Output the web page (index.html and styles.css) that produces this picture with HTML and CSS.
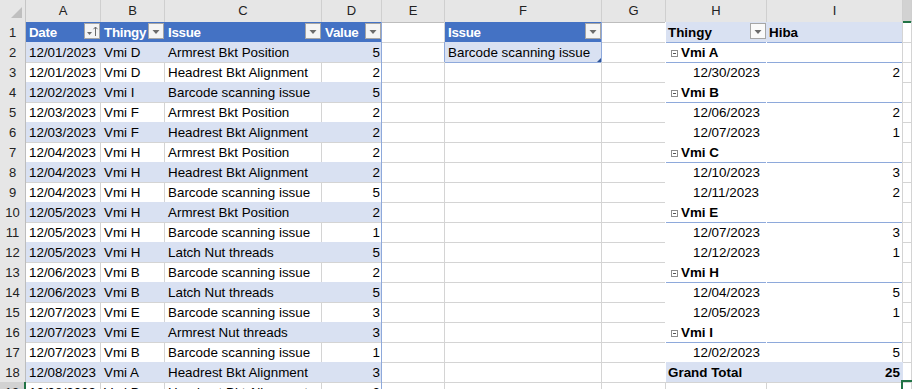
FILE: index.html
```html
<!DOCTYPE html>
<html lang="en">
<head>
  <meta charset="UTF-8">
  <title>Book1 - Excel</title>
  <link rel="stylesheet" href="styles.css">
</head>
<body>
  <div class="sheet">
    <!-- column letters -->
    <div class="row hdrow">
      <div class="corner">
        <svg width="26" height="22" viewBox="0 0 26 22"><polygon points="22,7 22,18 11,18" fill="#bfbfbf"/></svg>
      </div>
      <div class="ch">A</div>
      <div class="ch">B</div>
      <div class="ch">C</div>
      <div class="ch">D</div>
      <div class="ch">E</div>
      <div class="ch">F</div>
      <div class="ch">G</div>
      <div class="ch">H</div>
      <div class="ch">I</div>
      <div class="ch sel"></div>
    </div>

    <!-- 1 -->
    <div class="row">
      <div class="rh">1</div>
      <div class="c th">Date
        <span class="fbtn">
          <svg width="16" height="16" viewBox="0 0 16 16"><rect x="0.5" y="0.5" width="15" height="15" fill="#f4f4f4" stroke="#a6a6a6"/><polygon points="3,9 8,9 5.5,12" fill="#6b6b6b"/><path d="M11.5 13V4M9.5 6.2l2-2.2 2 2.2" stroke="#6b6b6b" fill="none"/></svg>
        </span>
      </div>
      <div class="c th">Thingy
        <span class="fbtn"><svg width="16" height="16" viewBox="0 0 16 16"><rect x="0.5" y="0.5" width="15" height="15" fill="#f4f4f4" stroke="#a6a6a6"/><polygon points="4.5,7 11.5,7 8,11" fill="#6b6b6b"/></svg></span>
      </div>
      <div class="c th">Issue
        <span class="fbtn"><svg width="16" height="16" viewBox="0 0 16 16"><rect x="0.5" y="0.5" width="15" height="15" fill="#f4f4f4" stroke="#a6a6a6"/><polygon points="4.5,7 11.5,7 8,11" fill="#6b6b6b"/></svg></span>
      </div>
      <div class="c th tr">Value
        <span class="fbtn"><svg width="16" height="16" viewBox="0 0 16 16"><rect x="0.5" y="0.5" width="15" height="15" fill="#f4f4f4" stroke="#a6a6a6"/><polygon points="4.5,7 11.5,7 8,11" fill="#6b6b6b"/></svg></span>
      </div>
      <div class="c"></div>
      <div class="c th tr">Issue
        <span class="fbtn"><svg width="16" height="16" viewBox="0 0 16 16"><rect x="0.5" y="0.5" width="15" height="15" fill="#f4f4f4" stroke="#a6a6a6"/><polygon points="4.5,7 11.5,7 8,11" fill="#6b6b6b"/></svg></span>
      </div>
      <div class="c ng"></div>
      <div class="c phd">Thingy
        <span class="fbtn"><svg width="16" height="16" viewBox="0 0 16 16"><rect x="0.5" y="0.5" width="15" height="15" fill="#fafafa" stroke="#a6a6a6"/><polygon points="4.5,7 11.5,7 8,11" fill="#6b6b6b"/></svg></span>
      </div>
      <div class="c phd pr">Hiba</div>
      <div class="c"></div>
    </div>

    <!-- 2 -->
    <div class="row">
      <div class="rh">2</div>
      <div class="c band">12/01/2023</div>
      <div class="c band">Vmi D</div>
      <div class="c band">Armrest Bkt Position</div>
      <div class="c band num tr">5</div>
      <div class="c eb"></div>
      <div class="c band slc">Barcode scanning issue<span class="grip"></span></div>
      <div class="c ng"></div>
      <div class="c pg"><span class="tog"></span>Vmi A</div>
      <div class="c pg pr"></div>
      <div class="c"></div>
    </div>

    <!-- 3 -->
    <div class="row">
      <div class="rh">3</div>
      <div class="c">12/01/2023</div>
      <div class="c">Vmi D</div>
      <div class="c">Headrest Bkt Alignment</div>
      <div class="c num tr">2</div>
      <div class="c"></div>
      <div class="c"></div>
      <div class="c ng"></div>
      <div class="c pd">12/30/2023</div>
      <div class="c pv pr">2</div>
      <div class="c"></div>
    </div>

    <!-- 4 -->
    <div class="row">
      <div class="rh">4</div>
      <div class="c band">12/02/2023</div>
      <div class="c band">Vmi I</div>
      <div class="c band">Barcode scanning issue</div>
      <div class="c band num tr">5</div>
      <div class="c"></div>
      <div class="c"></div>
      <div class="c ng"></div>
      <div class="c pg"><span class="tog"></span>Vmi B</div>
      <div class="c pg pr"></div>
      <div class="c"></div>
    </div>

    <!-- 5 -->
    <div class="row">
      <div class="rh">5</div>
      <div class="c">12/03/2023</div>
      <div class="c">Vmi F</div>
      <div class="c">Armrest Bkt Position</div>
      <div class="c num tr">2</div>
      <div class="c"></div>
      <div class="c"></div>
      <div class="c ng"></div>
      <div class="c pd">12/06/2023</div>
      <div class="c pv pr">2</div>
      <div class="c"></div>
    </div>

    <!-- 6 -->
    <div class="row">
      <div class="rh">6</div>
      <div class="c band">12/03/2023</div>
      <div class="c band">Vmi F</div>
      <div class="c band">Headrest Bkt Alignment</div>
      <div class="c band num tr">2</div>
      <div class="c"></div>
      <div class="c"></div>
      <div class="c ng"></div>
      <div class="c pd">12/07/2023</div>
      <div class="c pv pr">1</div>
      <div class="c"></div>
    </div>

    <!-- 7 -->
    <div class="row">
      <div class="rh">7</div>
      <div class="c">12/04/2023</div>
      <div class="c">Vmi H</div>
      <div class="c">Armrest Bkt Position</div>
      <div class="c num tr">2</div>
      <div class="c"></div>
      <div class="c"></div>
      <div class="c ng"></div>
      <div class="c pg"><span class="tog"></span>Vmi C</div>
      <div class="c pg pr"></div>
      <div class="c"></div>
    </div>

    <!-- 8 -->
    <div class="row">
      <div class="rh">8</div>
      <div class="c band">12/04/2023</div>
      <div class="c band">Vmi H</div>
      <div class="c band">Headrest Bkt Alignment</div>
      <div class="c band num tr">2</div>
      <div class="c"></div>
      <div class="c"></div>
      <div class="c ng"></div>
      <div class="c pd">12/10/2023</div>
      <div class="c pv pr">3</div>
      <div class="c"></div>
    </div>

    <!-- 9 -->
    <div class="row">
      <div class="rh">9</div>
      <div class="c">12/04/2023</div>
      <div class="c">Vmi H</div>
      <div class="c">Barcode scanning issue</div>
      <div class="c num tr">5</div>
      <div class="c"></div>
      <div class="c"></div>
      <div class="c ng"></div>
      <div class="c pd">12/11/2023</div>
      <div class="c pv pr">2</div>
      <div class="c"></div>
    </div>

    <!-- 10 -->
    <div class="row">
      <div class="rh">10</div>
      <div class="c band">12/05/2023</div>
      <div class="c band">Vmi H</div>
      <div class="c band">Armrest Bkt Position</div>
      <div class="c band num tr">2</div>
      <div class="c"></div>
      <div class="c"></div>
      <div class="c ng"></div>
      <div class="c pg"><span class="tog"></span>Vmi E</div>
      <div class="c pg pr"></div>
      <div class="c"></div>
    </div>

    <!-- 11 -->
    <div class="row">
      <div class="rh">11</div>
      <div class="c">12/05/2023</div>
      <div class="c">Vmi H</div>
      <div class="c">Barcode scanning issue</div>
      <div class="c num tr">1</div>
      <div class="c"></div>
      <div class="c"></div>
      <div class="c ng"></div>
      <div class="c pd">12/07/2023</div>
      <div class="c pv pr">3</div>
      <div class="c"></div>
    </div>

    <!-- 12 -->
    <div class="row">
      <div class="rh">12</div>
      <div class="c band">12/05/2023</div>
      <div class="c band">Vmi H</div>
      <div class="c band">Latch Nut threads</div>
      <div class="c band num tr">5</div>
      <div class="c"></div>
      <div class="c"></div>
      <div class="c ng"></div>
      <div class="c pd">12/12/2023</div>
      <div class="c pv pr">1</div>
      <div class="c"></div>
    </div>

    <!-- 13 -->
    <div class="row">
      <div class="rh">13</div>
      <div class="c">12/06/2023</div>
      <div class="c">Vmi B</div>
      <div class="c">Barcode scanning issue</div>
      <div class="c num tr">2</div>
      <div class="c"></div>
      <div class="c"></div>
      <div class="c ng"></div>
      <div class="c pg"><span class="tog"></span>Vmi H</div>
      <div class="c pg pr"></div>
      <div class="c"></div>
    </div>

    <!-- 14 -->
    <div class="row">
      <div class="rh">14</div>
      <div class="c band">12/06/2023</div>
      <div class="c band">Vmi B</div>
      <div class="c band">Latch Nut threads</div>
      <div class="c band num tr">5</div>
      <div class="c"></div>
      <div class="c"></div>
      <div class="c ng"></div>
      <div class="c pd">12/04/2023</div>
      <div class="c pv pr">5</div>
      <div class="c"></div>
    </div>

    <!-- 15 -->
    <div class="row">
      <div class="rh">15</div>
      <div class="c">12/07/2023</div>
      <div class="c">Vmi E</div>
      <div class="c">Barcode scanning issue</div>
      <div class="c num tr">3</div>
      <div class="c"></div>
      <div class="c"></div>
      <div class="c ng"></div>
      <div class="c pd">12/05/2023</div>
      <div class="c pv pr">1</div>
      <div class="c"></div>
    </div>

    <!-- 16 -->
    <div class="row">
      <div class="rh">16</div>
      <div class="c band">12/07/2023</div>
      <div class="c band">Vmi E</div>
      <div class="c band">Armrest Nut threads</div>
      <div class="c band num tr">3</div>
      <div class="c"></div>
      <div class="c"></div>
      <div class="c ng"></div>
      <div class="c pg"><span class="tog"></span>Vmi I</div>
      <div class="c pg pr"></div>
      <div class="c"></div>
    </div>

    <!-- 17 -->
    <div class="row">
      <div class="rh">17</div>
      <div class="c">12/07/2023</div>
      <div class="c">Vmi B</div>
      <div class="c">Barcode scanning issue</div>
      <div class="c num tr">1</div>
      <div class="c"></div>
      <div class="c"></div>
      <div class="c ng"></div>
      <div class="c pd pend">12/02/2023</div>
      <div class="c pv pr pend">5</div>
      <div class="c"></div>
    </div>

    <!-- 18 -->
    <div class="row">
      <div class="rh">18</div>
      <div class="c band">12/08/2023</div>
      <div class="c band">Vmi A</div>
      <div class="c band">Headrest Bkt Alignment</div>
      <div class="c band num tr">3</div>
      <div class="c"></div>
      <div class="c"></div>
      <div class="c ng"></div>
      <div class="c ptot">Grand Total</div>
      <div class="c ptot pr num">25</div>
      <div class="c"></div>
    </div>

    <!-- 19 -->
    <div class="row">
      <div class="rh rsel">19</div>
      <div class="c">12/08/2023</div>
      <div class="c">Vmi D</div>
      <div class="c">Headrest Bkt Alignment</div>
      <div class="c num tr">2</div>
      <div class="c"></div>
      <div class="c"></div>
      <div class="c"></div>
      <div class="c"></div>
      <div class="c"></div>
      <div class="c active"></div>
    </div>
  </div>
</body>
</html>
```

FILE: styles.css
```css
* {
  box-sizing: border-box;
}
body {
  margin: 0;
  padding: 0;
  background-color: #ffffff;
  overflow: hidden;
}
.sheet {
  font-family: "Liberation Sans", Arial, sans-serif;
  font-size: 13.4px;
  color: #000000;
  width: 912px;
}
.row {
  display: grid;
  grid-template-columns: 26px 75px 64px 157px 60px 63px 157px 64px 101px 136px 1fr;
  height: 20px;
}
.hdrow {
  height: 22px;
}

/* column and row headings */
.corner {
  background-color: #e6e6e6;
  border-right: 1px solid #c6c6c6;
  border-bottom: 1px solid #bdbdbd;
}
.corner svg {
  display: block;
}
.ch {
  background-color: #e6e6e6;
  border-right: 1px solid #cfcfcf;
  border-bottom: 1px solid #bdbdbd;
  text-align: center;
  font-size: 13px;
  line-height: 21px;
  color: #222222;
}
.ch.sel {
  background-color: #d2d2d2;
  border-bottom: 2px solid #217346;
}
.rh {
  background-color: #e6e6e6;
  border-right: 1px solid #bdbdbd;
  border-bottom: 1px solid #d0d0d0;
  text-align: center;
  font-size: 13px;
  line-height: 19px;
  padding-top: 1px;
  color: #222222;
}
.rh.rsel {
  background-color: #d2d2d2;
  border-right: 2px solid #217346;
}

/* cells */
.c {
  position: relative;
  border-right: 1px solid #d4d4d4;
  border-bottom: 1px solid #d4d4d4;
  padding: 2px 3px 0 3px;
  line-height: 17px;
  white-space: nowrap;
  overflow: hidden;
}
.num {
  text-align: right;
  padding-right: 1px;
}
.band {
  background-color: #d9e1f2;
  border-right-color: #d9e1f2;
}
.tr {
  border-right-color: #8ea9db;
}
.th {
  background-color: #4472c4;
  color: #ffffff;
  font-weight: bold;
  letter-spacing: -0.3px;
  border-right-color: #4472c4;
  border-bottom-color: #4472c4;
}
.th.tr {
  border-right-color: #8ea9db;
}
.fbtn {
  position: absolute;
  right: 0;
  top: 1px;
  width: 16px;
  height: 16px;
}
.fbtn svg {
  display: block;
}

/* single row table in column F */
.eb {
  border-right-color: #8ea9db;
}
.slc {
  border-right-color: #8ea9db;
  border-bottom-color: #8ea9db;
}
.grip {
  position: absolute;
  right: 0;
  bottom: 0;
  width: 0;
  height: 0;
  border-left: 4px solid transparent;
  border-bottom: 4px solid #2f5597;
}

/* pivot */
.ng {
  border-right-color: #ffffff;
}
.phd {
  background-color: #d9e1f2;
  font-weight: bold;
  border-right-color: #d9e1f2;
  border-bottom-color: #8ea9db;
  padding-left: 2px;
}
.pr {
  border-right-color: #d4d4d4;
}
.pg {
  font-weight: bold;
  border-right-color: #ffffff;
  border-bottom-color: #8ea9db;
  padding-left: 5px;
}
.pg.pr {
  border-right-color: #d4d4d4;
}
.tog {
  display: inline-block;
  width: 7px;
  height: 7px;
  border: 1px solid #8c8c8c;
  margin-right: 3px;
  vertical-align: 0;
  position: relative;
}
.tog::after {
  content: "";
  position: absolute;
  left: 1px;
  right: 1px;
  top: 2px;
  height: 1px;
  background-color: #555555;
}
.pd {
  border-right-color: #ffffff;
  border-bottom-color: #ffffff;
  padding-left: 27px;
}
.pv {
  border-bottom-color: #ffffff;
  text-align: right;
  padding-right: 2px;
}
.pend {
  border-bottom-color: #8ea9db;
}
.ptot {
  background-color: #d9e1f2;
  font-weight: bold;
  border-right-color: #d9e1f2;
  padding-left: 2px;
}
.ptot.num {
  padding-right: 2px;
}

/* active cell */
.active {
  overflow: visible;
}
.active::after {
  content: "";
  position: absolute;
  left: -2px;
  top: -2px;
  width: 40px;
  height: 30px;
  border: 2px solid #217346;
}
```
